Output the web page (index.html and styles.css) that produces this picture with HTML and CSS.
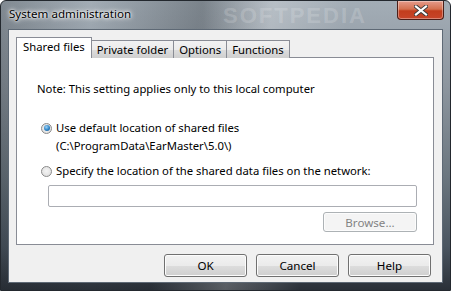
FILE: index.html
```html
<!DOCTYPE html>
<html lang="en">
<head>
  <meta charset="UTF-8" />
  <title>System administration</title>
  <link rel="stylesheet" href="styles.css">
</head>
<body>
  <div class="window">
    <div class="titlebar">
      <span class="title">System administration</span>
      <span class="watermark">SOFTPEDIA</span>
      <button class="close" title="Close">
        <svg width="14" height="11" viewBox="0 0 14 11">
          <path d="M2 1.5 L12 9.5 M12 1.5 L2 9.5" stroke="#3a3a3a" stroke-width="4" stroke-linecap="square"/>
          <path d="M2 1.5 L12 9.5 M12 1.5 L2 9.5" stroke="#ffffff" stroke-width="2.2" stroke-linecap="square"/>
        </svg>
      </button>
    </div>

    <div class="client">
      <div class="tabs">
        <div class="tab active">Shared files</div>
        <div class="tab">Private folder</div>
        <div class="tab">Options</div>
        <div class="tab">Functions</div>
      </div>

      <div class="panel">
        <p class="note">Note: This setting applies only to this local computer</p>

        <label class="option">
          <span class="radio checked"></span>
          <span>Use default location of shared files</span>
        </label>
        <p class="path">(C:\ProgramData\EarMaster\5.0\)</p>

        <label class="option second">
          <span class="radio"></span>
          <span>Specify the location of the shared data files on the network:</span>
        </label>
        <input class="location" type="text">
        <div class="browse-row">
          <button class="btn browse" disabled>Browse...</button>
        </div>
      </div>

      <div class="actions">
        <button class="btn">OK</button>
        <button class="btn">Cancel</button>
        <button class="btn">Help</button>
      </div>
    </div>
  </div>
</body>
</html>
```

FILE: styles.css
```css
body {
  margin: 0;
  font-family: "Noto Sans", "Open Sans", sans-serif;
  font-size: 11.3px;
  color: #000;
}

.window {
  width: 451px;
  height: 291px;
  box-sizing: border-box;
  padding: 0 7px 7px 7px;
  display: flex;
  flex-direction: column;
  background:
    linear-gradient(100deg, rgba(255,255,255,0) 40%, rgba(255,255,255,0.22) 55%, rgba(255,255,255,0) 70%),
    linear-gradient(90deg, rgba(30,35,40,0.25) 0%, rgba(30,35,40,0) 20%, rgba(30,35,40,0.3) 45%, rgba(30,35,40,0) 60%),
    linear-gradient(180deg, #a3adb6 0%, #8c959e 30%, #6c7780 60%, #4a5560 85%, #2a3038 100%);
  border: 1px solid #23282e;
  border-radius: 6px 6px 0 0;
}

.titlebar {
  height: 28px;
  display: flex;
  align-items: center;
  position: relative;
}

.title {
  padding-left: 1px;
  margin-top: -3px;
  font-size: 11.6px;
  color: #000;
  text-shadow: 0 0 6px #fff, 0 0 4px #fff, 0 0 2px #fff;
}

.watermark {
  position: absolute;
  left: 215px;
  top: 2px;
  font-family: "Liberation Sans", sans-serif;
  font-weight: bold;
  font-size: 22px;
  letter-spacing: 2px;
  color: rgba(255,255,255,0.18);
}

.close {
  position: absolute;
  right: -1px;
  top: 0;
  width: 47px;
  height: 19px;
  border: 1px solid #4b1e18;
  border-top: none;
  border-radius: 0 0 4px 4px;
  background: linear-gradient(180deg, #e59b8b 0%, #d4704f 45%, #c23d1d 55%, #c7452a 100%);
  box-shadow: inset 0 0 0 1px rgba(255,255,255,0.35);
  display: flex;
  align-items: center;
  justify-content: center;
  padding: 0;
}

.client {
  flex: 1;
  background: #f0f0f0;
  border: 1px solid #5e6975;
  display: flex;
  flex-direction: column;
  padding: 7px 8px 0 7px;
}

.tabs {
  display: flex;
  align-items: flex-end;
  height: 21px;
  position: relative;
  z-index: 1;
  margin-bottom: -1px;
}

.tab {
  height: 18px;
  line-height: 17px;
  padding: 0 5px;
  border: 1px solid #898c95;
  border-bottom: none;
  margin-left: -1px;
  background: linear-gradient(180deg, #f2f2f2 0%, #ebebeb 50%, #dddddd 51%, #cfcfcf 100%);
  box-sizing: border-box;
}

.tab.active {
  height: 21px;
  margin-left: 0;
  padding: 0 6px;
  background: #fff;
  line-height: 18px;
  z-index: 2;
}

.panel {
  height: 188px;
  box-sizing: border-box;
  background: #fff;
  border: 1px solid #898c95;
  padding: 23px 20px 0 20px;
  display: flex;
  flex-direction: column;
}

.note {
  margin: 0;
  line-height: 16px;
}

.option {
  display: flex;
  align-items: center;
  gap: 4px;
  margin-top: 23px;
  padding-left: 4px;
  line-height: 16px;
}

.option.second {
  margin-top: 9px;
}

.path {
  margin: 2px 0 0 19px;
  line-height: 16px;
}

.radio {
  width: 11px;
  height: 11px;
  box-sizing: border-box;
  border-radius: 50%;
  border: 1px solid #8a8a8a;
  background: radial-gradient(circle at 50% 45%, #f4f4f4 0%, #e2e2e2 70%, #d0d0d0 100%);
  position: relative;
  flex: none;
}

.radio.checked::after {
  content: "";
  position: absolute;
  left: 1.5px;
  top: 1.5px;
  width: 6px;
  height: 6px;
  border-radius: 50%;
  background: radial-gradient(circle at 40% 35%, #9fd3f7 0%, #2b83c6 55%, #174e87 100%);
}

.location {
  margin: 6px 0 0 11px;
  width: 369px;
  height: 22px;
  box-sizing: border-box;
  border: 1px solid #abadb3;
  border-radius: 2px;
  background: #fff;
}

.browse-row {
  display: flex;
  justify-content: flex-end;
  margin-top: 5px;
  width: 379px;
  margin-left: 1px;
}

.btn {
  font-family: "Noto Sans", "Open Sans", sans-serif;
  font-size: 11.6px;
  width: 83px;
  height: 23px;
  padding: 0;
  border: 1px solid #707070;
  border-radius: 3px;
  background: linear-gradient(180deg, #f2f2f2 0%, #ebebeb 50%, #dddddd 51%, #cfcfcf 100%);
  box-shadow: inset 0 0 0 1px #fcfcfc;
  color: #000;
}

.btn.browse {
  width: 94px;
  height: 20px;
  border-color: #adb2b5;
  background: #f4f4f4;
  color: #838383;
}

.actions {
  display: flex;
  justify-content: flex-end;
  gap: 9px;
  margin-top: 9px;
  padding-right: 3px;
}
```
